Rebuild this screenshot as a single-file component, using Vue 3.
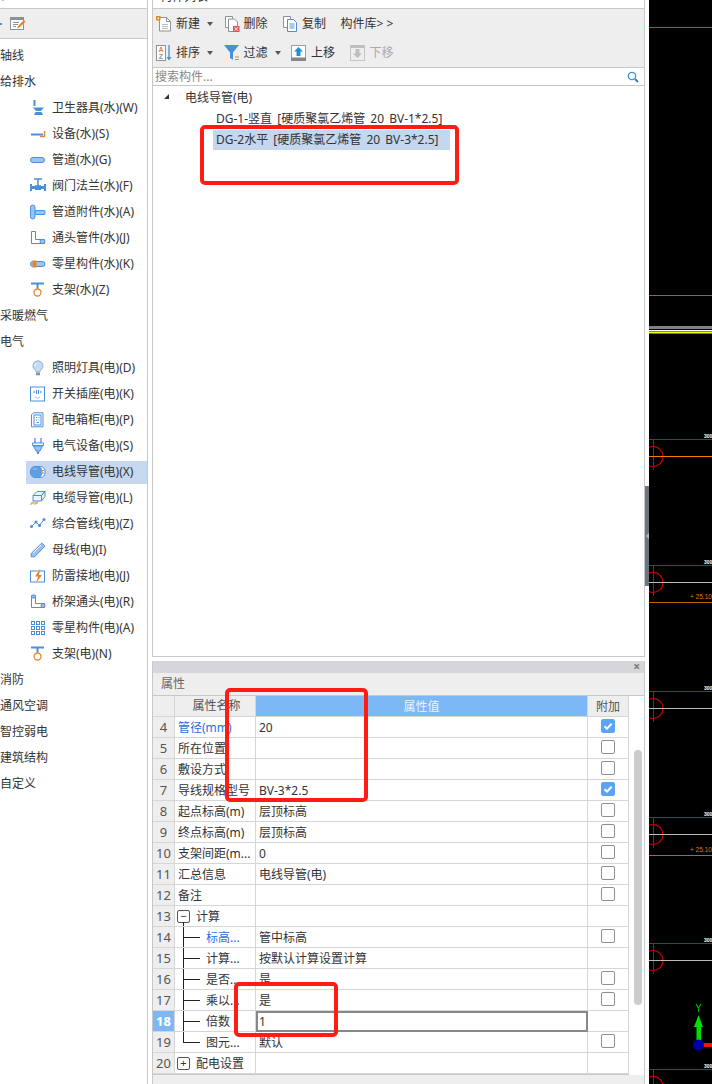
<template>
  <div class="screen">
    <!-- 左侧构件树 -->
    <aside class="left">
      <div class="left-top"><span>栏</span></div>
      <div class="left-tools">
        <i class="left-dash"></i>
        <svg class="ico" viewBox="0 0 16 16" v-html="icons.note"></svg>
      </div>
      <div class="tree">
        <div v-for="item in treeItems" :key="item.label" class="tree-row" :class="{ child: item.icon, active: item.active }">
          <div class="tree-inner">
            <svg v-if="item.icon" class="ico" viewBox="0 0 16 16" v-html="icons[item.icon]"></svg>
            <span>{{ item.label }}</span>
          </div>
        </div>
      </div>
    </aside>

    <main class="center">
      <!-- 构件列表 -->
      <section class="list">
        <div class="list-top"><span>构件列表</span></div>
        <div class="tool-row">
          <div v-for="t in toolsA" :key="t.label" class="tool" :class="{ disabled: t.disabled }">
            <svg v-if="t.icon" class="ico" viewBox="0 0 16 16" v-html="icons[t.icon]"></svg>
            <span>{{ t.label }}</span>
            <i v-if="t.caret" class="caret"></i>
          </div>
        </div>
        <div class="tool-row">
          <div v-for="t in toolsB" :key="t.label" class="tool" :class="{ disabled: t.disabled }">
            <svg class="ico" viewBox="0 0 16 16" v-html="icons[t.icon]"></svg>
            <span>{{ t.label }}</span>
            <i v-if="t.caret" class="caret"></i>
          </div>
        </div>
        <div class="search">
          <span>搜索构件...</span>
          <svg class="search-ico" viewBox="0 0 12 12">
            <circle cx="5" cy="5" r="3.7" fill="none" stroke="#3f93cc" stroke-width="1.3" />
            <path d="M8 8l3 3" stroke="#2f7fb8" stroke-width="1.8" />
          </svg>
        </div>
        <div class="list-body">
          <div class="node root"><i class="tri"></i>电线导管(电)</div>
          <div class="node leaf">DG-1-竖直 [硬质聚氯乙烯管 20 BV-1*2.5]</div>
          <div class="node leaf selected">DG-2水平 [硬质聚氯乙烯管 20 BV-3*2.5]</div>
        </div>
      </section>

      <!-- 属性 -->
      <section class="props">
        <div class="props-bar"><span class="x">×</span></div>
        <div class="props-title">属性</div>
        <div class="table-wrap">
          <div class="table">
            <div class="row head">
              <div class="c num"></div>
              <div class="c name">属性名称</div>
              <div class="c value">属性值</div>
              <div class="c extra">附加</div>
            </div>
            <div v-for="r in rows" :key="r.n" class="row" :class="{ current: r.editing }">
              <div class="c num">{{ r.n }}</div>
              <div class="c name" :class="{ link: r.link, kid: r.kid, last: r.last, open: r.toggle === '−' }">
                <span v-if="r.toggle" class="toggle">{{ r.toggle }}</span>
                <span class="name-text">{{ r.name }}</span>
              </div>
              <div class="c val" :class="{ editing: r.editing }">{{ r.value }}</div>
              <div class="c box-cell">
                <span v-if="r.box" class="box" :class="{ on: r.on }">
                  <svg v-if="r.on" viewBox="0 0 14 14"><path d="M3.5 7.2l2.5 2.4 4.6-4.8" fill="none" stroke="#fff" stroke-width="2" /></svg>
                </span>
              </div>
            </div>
          </div>
          <div class="scroll"><div class="thumb"></div></div>
        </div>
        <div class="props-foot"></div>
      </section>
    </main>

    <div class="splitter">
      <div class="handle"><i></i></div>
    </div>

    <!-- 绘图区 -->
    <svg class="cad" viewBox="649 0 63 1084">
      <rect x="649" y="0" width="63" height="1084" fill="#000" />
      <path d="M649 27.5h63" stroke="#1f9a1f" />
      <path d="M649 295.5h63" stroke="#a5601c" />
      <rect x="649" y="326" width="63" height="3" fill="#808080" />
      <rect x="649" y="330" width="63" height="1.5" fill="#fff" />
      <rect x="649" y="332" width="63" height="1.5" fill="#ff0" />
      <g v-for="a in axes" :key="a.y">
        <path :d="`M649 ${a.y + 0.5}h63`" stroke="#e00000" />
        <path :d="`M653.5 ${a.y + 1}v30`" stroke="#d00000" />
        <circle cx="653" :cy="a.y + 17.5" r="10" fill="none" stroke="#d00000" stroke-width="1.2" />
        <path :d="`M649 ${a.y + 17.5}h63`" :stroke="a.line" />
        <text x="704" :y="a.y - 1" class="cad-mark">300</text>
      </g>
      <text x="690" y="599" class="cad-level">+ 25.10</text>
      <path d="M649 602.5h63" stroke="#c46200" />
      <text x="690" y="852" class="cad-level">+ 25.10</text>
      <path d="M649 855.5h63" stroke="#c46200" />
      <path d="M694 1027l4.5-12 4.500 12z" fill="#00e000" />
      <rect x="696.500" y="1027" width="4.500" height="18" fill="#00e000" />
      <path d="M696 1004l2.500 4 2.500-4M698.500 1008v4" fill="none" stroke="#00b000" stroke-width="1.200" />
      <rect x="703" y="1043" width="9" height="4" fill="#ff1010" />
      <circle cx="698.500" cy="1045" r="5.500" fill="#0000a8" />
    </svg>

    <!-- 红色标注框 -->
    <i class="mark mark-a"></i>
    <i class="mark mark-b"></i>
    <i class="mark mark-c"></i>
  </div>
</template>

<script setup>
const B = '#4a8fd8'
const L = '#9cc3ee'
const O = '#e8852b'
const G = '#8c9298'

const bracket = `<path d="M1.500 1.500h4v8h9v4h-13z" fill="#fff" stroke="${B}"/><rect x="10" y="9.500" width="5" height="4" rx="2" fill="${L}" stroke="${B}"/>`
const hanger = `<path d="M1 1.500h13M7.500 1.500v5" fill="none" stroke="${B}" stroke-width="2"/><circle cx="7.500" cy="10.500" r="3.500" fill="#fff" stroke="${O}" stroke-width="1.300"/>`

const icons = {
  sani: `<path d="M4.500 0v6" stroke="${B}" stroke-width="2"/><path d="M3 7.500h11l-3 3.500H6z" fill="${B}"/><path d="M5.500 12h6l1.500 3H4z" fill="${B}"/>`,
  equip: `<path d="M1 8.500h12" stroke="${B}" stroke-width="2"/><path d="M14.500 5v5.500H10" fill="none" stroke="${O}" stroke-width="1.300"/>`,
  pipe: `<rect x="0.500" y="5.500" width="14" height="5" rx="2.500" fill="${L}" stroke="${B}"/>`,
  valve: `<path d="M4 1h8M8 1v7" stroke="${B}" stroke-width="1.500"/><path d="M0 6h2v2h3v-1l3 1 3-1v1h3V6h2v7h-2v-2h-3v1H5v-1H2v2H0z" fill="${B}"/><circle cx="8" cy="9.500" r="2.500" fill="${B}"/>`,
  fitting: `<rect x="5" y="6.500" width="10" height="4" rx="1" fill="${L}" stroke="${B}"/><rect x="0.500" y="1" width="4.500" height="14" rx="2.200" fill="${L}" stroke="${B}"/>`,
  tee: bracket,
  misc: `<rect x="0.500" y="5.500" width="14.500" height="5" rx="2.500" fill="${L}" stroke="${B}"/><rect x="2.500" y="4.500" width="4" height="7" fill="${O}"/>`,
  support: hanger,
  lamp: `<path d="M8 .8a5 5 0 0 1 3 9c-.7.6-1 1.200-1 2H6c0-.8-.3-1.400-1-2a5 5 0 0 1 3-9z" fill="#c4dcf4" stroke="#8fb0d0"/><path d="M6 3.500a3 3 0 0 0-1 2.500" fill="none" stroke="#fff"/><rect x="6" y="12.500" width="4" height="2.800" fill="${G}"/>`,
  socket: `<rect x="0.500" y="1" width="14" height="14" fill="#fff" stroke="${B}"/><path d="M6.500 4v4M8.500 4v4" stroke="${B}"/><path d="M5 5L3.500 6 5 7M10 5l1.500 1L10 7" fill="none" stroke="${B}" stroke-width=".8"/><path d="M5 11l2.500 1.500L10 11" fill="none" stroke="${L}"/>`,
  cabinet: `<path d="M3.500.8h9.500v14H1.500v-12z" fill="#fff" stroke="${B}"/><rect x="4" y="3" width="7" height="10" fill="#fff" stroke="${B}"/><path d="M6 5.500h1M8.500 5.500h1M6 8h1M8.500 8h1M6.500 10.500h2.500" stroke="${B}"/>`,
  plug: `<path d="M5 0v5M11 0v5" stroke="${B}" stroke-width="1.300"/><path d="M2.500 5h11v2.500H2.500z" fill="#fff" stroke="${B}"/><path d="M3.500 8h9l-2.500 5H6z" fill="${L}" stroke="${B}"/><path d="M6.500 13.500h3L8.800 16H7.200z" fill="${B}"/>`,
  conduit: `<rect x="0.500" y="2.500" width="14.500" height="11" rx="4.500" fill="#fff" stroke="${B}"/><path d="M5 2.500h4a3.500 5.500 0 0 1 0 11H5a4.500 4.500 0 0 1-4.500-4.500v-2A4.500 4.500 0 0 1 5 2.500z" fill="#5f9ee2"/><path d="M3 5h4" stroke="#a8ccf2"/><path d="M11 6.500h3M11 9h3" stroke="${O}"/>`,
  cable: `<path d="M3 5.500L7 1.500h8l-3.500 4zM3 5.500h8.500V11H3zM11.500 5.500L15 1.500v5L11.500 11z" fill="#eaf2fb" stroke="${B}"/><path d="M.5 15L4 11M4.500 15L8 11M.5 13H8" fill="none" stroke="${O}" stroke-width=".9"/>`,
  mixed: `<path d="M1.500 10.500L6 6l3.500 3.500L14 3.500" fill="none" stroke="${B}"/><circle cx="1.500" cy="10.500" r="1.500" fill="${B}"/><circle cx="6" cy="6" r="1.500" fill="${B}"/><circle cx="9.500" cy="9.500" r="1.500" fill="${B}"/><circle cx="14" cy="3.500" r="1.500" fill="${B}"/>`,
  bus: `<path d="M11.800 1L15 4.200 4.500 14.800H1.200v-3.300z" fill="${L}" stroke="${B}"/><path d="M3 11l8-8" stroke="#fff"/>`,
  bolt: `<rect x="0.500" y="3" width="14" height="11" fill="#fff" stroke="${B}"/><path d="M10.500 .5L5 8.500h3L6 15l6-8H8.800z" fill="${O}"/>`,
  bridge: `<path d="M1.500 1.500h4v8h9v4h-13z" fill="#fff" stroke="${B}"/><rect x="1.500" y="1" width="4" height="3" rx="1.500" fill="${L}" stroke="${B}"/><rect x="11" y="9.500" width="4" height="4" rx="2" fill="${L}" stroke="${B}"/>`,
  grid: [1, 6, 11].flatMap(y => [1.500, 6.500, 11.500].map(x => `<rect x="${x}" y="${y}.500" width="3" height="3" fill="none" stroke="${B}"/>`)).join(''),
  note: `<rect x="0.500" y="1.500" width="13" height="12" fill="#fff" stroke="${G}"/><rect x="0.500" y="1.500" width="13" height="2.500" fill="${G}"/><path d="M3 6.500h6M3 8.500h5M3 10.500h3" stroke="${G}"/><path d="M7 12.500l1-2.500 6-6 1.500 1.500-6 6z" fill="${O}"/>`,
  add: `<path d="M3.500 1.500h7l4 4v9.500h-11z" fill="#fff" stroke="${G}"/><path d="M10.500 1.500v4h4" fill="none" stroke="${G}"/><path d="M6 8.500h6M6 10.500h6M6 12.500h6" stroke="#b8bcc0"/><rect x="0" y="0" width="4.500" height="4.500" fill="${O}"/><rect x="1.500" y="1.500" width="1.500" height="1.500" fill="#fff"/>`,
  del: `<path d="M1.500 .5h7v11h-7z" fill="#fff" stroke="${G}"/><path d="M4.500 3h6l3 3v9.500h-9z" fill="#fff" stroke="${G}"/><rect x="9" y="10" width="6.500" height="6" fill="#e0505a"/><path d="M10.500 11.200l3.500 3.600M14 11.200l-3.500 3.600" stroke="#fff"/>`,
  copy: `<path d="M1.500 .5h7v11h-7z" fill="#fff" stroke="${G}"/><path d="M5.500 3.500h6l3 3v9h-9z" fill="#fff" stroke="${B}"/><path d="M7.500 8h5M7.500 10h5M7.500 12h5" stroke="${B}"/>`,
  sort: `<rect x="0.500" y="0.500" width="9" height="15" fill="#fff" stroke="${G}"/><text x="5" y="7.200" class="mini" fill="${O}">A</text><text x="5" y="14" class="mini" fill="${G}">Z</text><path d="M13 0v14" stroke="${B}" stroke-width="1.300"/><path d="M10.500 12l2.500 3.500 2.500-3.500z" fill="${B}"/>`,
  filter: `<path d="M0 0h15L9 7.500V15L6 13V7.500z" fill="${B}"/><path d="M11 12h4M11 14.500h4" stroke="${O}" stroke-width="1.200"/>`,
  up: `<rect x="0.500" y="0.500" width="14" height="15" fill="#fff" stroke="#9aa0a6"/><rect x="0" y="12.500" width="15" height="3.500" fill="#80868c"/><path d="M7.500 2L12 6.500H9.500V11h-4V6.500H3z" fill="#1f8fd8"/>`,
  down: `<rect x="0.500" y="0.500" width="14" height="15" fill="#eee" stroke="#c4c4c4"/><rect x="0" y="0" width="15" height="3" fill="#c0c0c0"/><path d="M7.500 13L12 8.500H9.500V4h-4v4.500H3z" fill="#bdbdbd"/>`,
}

const treeItems = [
  { label: '轴线' },
  { label: '给排水' },
  { label: '卫生器具(水)(W)', icon: 'sani' },
  { label: '设备(水)(S)', icon: 'equip' },
  { label: '管道(水)(G)', icon: 'pipe' },
  { label: '阀门法兰(水)(F)', icon: 'valve' },
  { label: '管道附件(水)(A)', icon: 'fitting' },
  { label: '通头管件(水)(J)', icon: 'tee' },
  { label: '零星构件(水)(K)', icon: 'misc' },
  { label: '支架(水)(Z)', icon: 'support' },
  { label: '采暖燃气' },
  { label: '电气' },
  { label: '照明灯具(电)(D)', icon: 'lamp' },
  { label: '开关插座(电)(K)', icon: 'socket' },
  { label: '配电箱柜(电)(P)', icon: 'cabinet' },
  { label: '电气设备(电)(S)', icon: 'plug' },
  { label: '电线导管(电)(X)', icon: 'conduit', active: true },
  { label: '电缆导管(电)(L)', icon: 'cable' },
  { label: '综合管线(电)(Z)', icon: 'mixed' },
  { label: '母线(电)(I)', icon: 'bus' },
  { label: '防雷接地(电)(J)', icon: 'bolt' },
  { label: '桥架通头(电)(R)', icon: 'bridge' },
  { label: '零星构件(电)(A)', icon: 'grid' },
  { label: '支架(电)(N)', icon: 'support' },
  { label: '消防' },
  { label: '通风空调' },
  { label: '智控弱电' },
  { label: '建筑结构' },
  { label: '自定义' },
]

const toolsA = [
  { label: '新建', icon: 'add', caret: true },
  { label: '删除', icon: 'del' },
  { label: '复制', icon: 'copy' },
  { label: '构件库> >' },
]
const toolsB = [
  { label: '排序', icon: 'sort', caret: true },
  { label: '过滤', icon: 'filter', caret: true },
  { label: '上移', icon: 'up' },
  { label: '下移', icon: 'down', disabled: true },
]

const rows = [
  { n: 4, name: '管径(mm)', value: '20', box: true, on: true, link: true },
  { n: 5, name: '所在位置', value: '', box: true },
  { n: 6, name: '敷设方式', value: '', box: true },
  { n: 7, name: '导线规格型号', value: 'BV-3*2.5', box: true, on: true },
  { n: 8, name: '起点标高(m)', value: '层顶标高', box: true },
  { n: 9, name: '终点标高(m)', value: '层顶标高', box: true },
  { n: 10, name: '支架间距(m...', value: '0', box: true },
  { n: 11, name: '汇总信息', value: '电线导管(电)', box: true },
  { n: 12, name: '备注', value: '', box: true },
  { n: 13, name: '计算', value: '', toggle: '−' },
  { n: 14, name: '标高...', value: '管中标高', box: true, kid: true, link: true },
  { n: 15, name: '计算...', value: '按默认计算设置计算', kid: true },
  { n: 16, name: '是否...', value: '是', box: true, kid: true },
  { n: 17, name: '乘以...', value: '是', box: true, kid: true },
  { n: 18, name: '倍数', value: '1', kid: true, editing: true },
  { n: 19, name: '图元...', value: '默认', box: true, kid: true, last: true },
  { n: 20, name: '配电设置', value: '', toggle: '+' },
]

const axes = [
  { y: 439, line: '#ff7a00' },
  { y: 565, line: '#bbb' },
  { y: 691, line: '#bbb' },
  { y: 817, line: '#bbb' },
  { y: 943, line: '#bbb' },
  { y: 1069, line: '#bbb' },
]
</script>

<style scoped>
.screen {
  position: relative;
  display: flex;
  width: 712px;
  height: 1084px;
  overflow: hidden;
  background: #fff;
  color: #333;
  font: 12px/20px "Noto Sans", "Noto Sans CJK SC", sans-serif;
}
.ico { width: 16px; height: 16px; flex: none; }
.ico :deep(.mini) { font: 700 7px "Liberation Sans", sans-serif; text-anchor: middle; }

/* 左侧 */
.left { width: 148px; flex: none; border-right: 1px solid #c8c8c8; box-sizing: border-box; }
.left-top { height: 8px; border-bottom: 1px solid #c8c8c8; overflow: hidden; line-height: 8px; }
.left-top span { position: relative; top: -8px; }
.left-tools { height: 29px; display: flex; align-items: center; background: #eee; border-bottom: 1px solid #c8c8c8; }
.left-dash { width: 2px; height: 2px; background: #4a8fd8; margin-right: 8px; }
.tree { padding-top: 4px; }
.tree-row { height: 26px; display: flex; align-items: center; }
.tree-inner { display: flex; align-items: center; gap: 6px; height: 23px; flex: 1; }
.tree-row.child .tree-inner { margin-left: 26px; padding-left: 4px; }
.tree-row.active .tree-inner { background: #c6d8ef; }

/* 中间 */
.center { width: 493px; flex: none; margin-left: 4px; display: flex; flex-direction: column; gap: 4px; }
.list {
  height: 657px;
  box-sizing: border-box;
  border: 1px solid #c8c8c8;
  border-top: 0;
  display: flex;
  flex-direction: column;
}
.list-top { height: 8px; border-bottom: 1px solid #c8c8c8; overflow: hidden; line-height: 8px; padding-left: 7px; }
.list-top span { position: relative; top: -7px; }
.tool-row { height: 29px; flex: none; display: flex; align-items: center; gap: 14.5px; padding-left: 3px; background: #eee; }
.tool { display: flex; align-items: center; gap: 4px; }
.tool.disabled { color: #aaa; }
.caret {
  width: 0;
  height: 0;
  margin: 1px -4px 0 3px;
  border: 3px solid transparent;
  border-top: 4px solid #555;
  border-bottom: 0;
}
.search {
  height: 19px;
  flex: none;
  box-sizing: border-box;
  display: flex;
  align-items: center;
  justify-content: space-between;
  padding: 1px 5px 0 2px;
  border-top: 1px solid #c8c8c8;
  border-bottom: 1px solid #c8c8c8;
  color: #888;
}
.search-ico { width: 12px; height: 12px; margin-top: -1px; }
.list-body { flex: 1; padding-top: 1px; word-spacing: 2px; }
.node { height: 20px; line-height: 20px; white-space: nowrap; }
.node.root { position: relative; padding-left: 32px; margin-top: 1px; }
.node.leaf { margin-left: 60px; padding-left: 3px; margin-top: 1px; width: 234px; }
.node.selected { background: #c5d7ef; }
.tri {
  position: absolute;
  left: 11px;
  top: 6px;
  width: 0;
  height: 0;
  border-left: 5px solid transparent;
  border-bottom: 5px solid #333;
}

.props {
  height: 423px;
  box-sizing: border-box;
  border-left: 1px solid #c8c8c8;
  border-right: 1px solid #c8c8c8;
  display: flex;
  flex-direction: column;
}
.props-bar {
  height: 12px;
  flex: none;
  background: #d5d6da;
  display: flex;
  justify-content: flex-end;
  align-items: center;
  padding-right: 4px;
}
.x { font-size: 12px; line-height: 12px; color: #777; font-weight: 700; }
.props-title {
  height: 23px;
  flex: none;
  box-sizing: border-box;
  background: #eee;
  border-bottom: 1px solid #c8c8c8;
  padding-left: 8px;
  line-height: 21px;
  color: #666;
}
.table-wrap { display: flex; height: 379px; flex: none; }
.table { width: 476px; flex: none; border-bottom: 1px solid #c8c8c8; }
.row { display: grid; grid-template-columns: 22px 81px 332px 41px; height: 21px; }
.c {
  box-sizing: border-box;
  border-right: 1px solid #d6d6d6;
  border-bottom: 1px solid #d6d6d6;
  line-height: 21px;
  white-space: nowrap;
  overflow: hidden;
}
.num { background: #eee; text-align: center; color: #555; font-size: 13px; line-height: 20px; }
.head .c { line-height: 22px; }
.head .name { background: #eee; justify-content: center; color: #555; }
.head .value { background: #7db8f6; text-align: center; color: #e9f3fd; }
.head .extra { background: #eee; text-align: center; color: #555; }
.current .num { background: #7db8f6; color: #fff; font-weight: 700; }
.name { position: relative; padding-left: 3px; display: flex; align-items: center; }
.name-text { padding-top: 1px; }
.name.link { color: #2a6fe0; }
.name.kid { padding-left: 31px; }
.name.kid::before { content: ""; position: absolute; left: 8px; top: 0; bottom: 0; width: 1px; background: #222; }
.name.kid::after { content: ""; position: absolute; left: 8px; top: 10px; width: 17px; height: 1px; background: #222; }
.name.last::before { bottom: 10px; }
.name.open::before { content: ""; position: absolute; left: 8px; top: 16px; bottom: 0; width: 1px; background: #222; }
.toggle {
  width: 13px;
  height: 13px;
  flex: none;
  box-sizing: border-box;
  margin: 0 6px 0 -1px;
  border: 1px solid #555;
  border-radius: 2px;
  background: #fff;
  font-size: 11px;
  line-height: 10px;
  text-align: center;
}
.val { padding-left: 3px; }
.val.editing { border: 2px solid #888; padding-left: 1px; line-height: 17px; }
.box-cell { display: flex; justify-content: center; padding: 2px 1px 0 0; }
.box {
  width: 14px;
  height: 14px;
  box-sizing: border-box;
  border: 1px solid #8f8f8f;
  border-radius: 2px;
  background: #fff;
}
.box svg { display: block; width: 14px; height: 14px; margin: -1px; }
.box.on { background: #5aa4f6; border-color: #5aa4f6; }
.scroll { flex: 1; padding: 54px 0 0 5px; }
.thumb { width: 8px; height: 255px; border-radius: 4px; background: #ccc; }
.props-foot { flex: 1; background: #eee; }

/* 分隔条 */
.splitter { width: 4px; flex: none; padding-top: 486px; }
.handle { height: 100px; background: #6a7580; display: flex; align-items: center; justify-content: center; }
.handle i {
  width: 0;
  height: 0;
  border: 3px solid transparent;
  border-right: 3px solid #b8bec4;
  border-left: 0;
}

.cad { width: 63px; height: 1084px; flex: none; display: block; }
.cad-mark { font: 700 5px "Liberation Sans", sans-serif; fill: #fff; }
.cad-level { font: 6.5px "Liberation Sans", sans-serif; fill: #e07a10; }

/* 红框 */
.mark { position: absolute; box-sizing: border-box; border: 4px solid #ff1c12; border-radius: 5px; }
.mark-a { left: 200px; top: 125px; width: 259px; height: 60px; }
.mark-b { left: 225px; top: 688px; width: 143px; height: 114px; }
.mark-c { left: 234px; top: 982px; width: 104px; height: 55px; }
</style>

<style>
body { background: #fff; }
</style>
